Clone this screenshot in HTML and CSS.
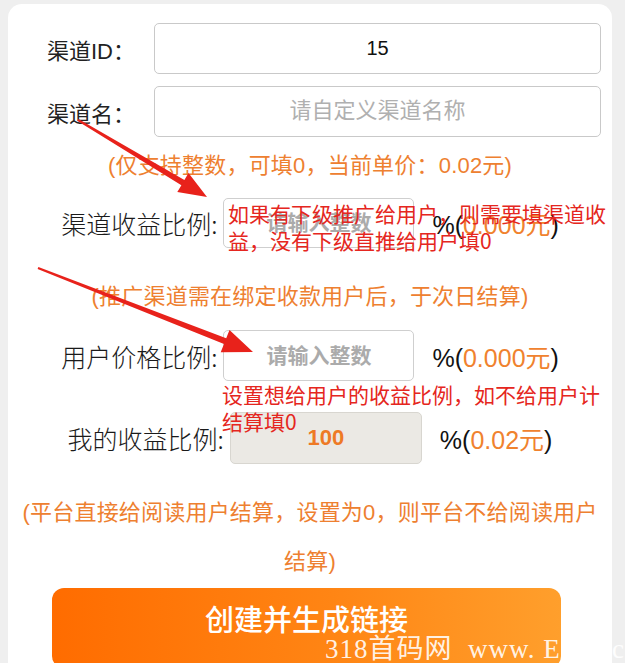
FILE: index.html
```html
<!DOCTYPE html>
<html lang="zh-CN">
<head>
<meta charset="utf-8">
<title>创建渠道</title>
<link rel="stylesheet" href="styles.css">
</head>
<body>
<div class="page">
  <div class="card">
    <div class="field">
      <label class="flabel">渠道ID：</label>
      <input class="finput" type="text" value="15">
    </div>
    <div class="field second">
      <label class="flabel">渠道名：</label>
      <input class="finput" type="text" placeholder="请自定义渠道名称">
    </div>
    <p class="note n1">(仅支持整数，可填0，当前单价：0.02元)</p>
    <div class="ratio r3">
      <label class="rlabel">渠道收益比例:</label>
      <input class="rinput" type="text" placeholder="请输入整数">
      <span class="suffix">%(<em>0.000元</em>)</span>
    </div>
    <p class="note n2">(推广渠道需在绑定收款用户后，于次日结算)</p>
    <div class="ratio r4">
      <label class="rlabel">用户价格比例:</label>
      <input class="rinput" type="text" placeholder="请输入整数">
      <span class="suffix">%(<em>0.000元</em>)</span>
    </div>
    <div class="ratio r5">
      <label class="rlabel">我的收益比例:</label>
      <input class="rinput mine" type="text" value="100" disabled>
      <span class="suffix">%(<em>0.02元</em>)</span>
    </div>
    <p class="note n3">(平台直接给阅读用户结算，设置为0，则平台不给阅读用户<br>结算)</p>
    <button class="submit" type="button">创建并生成链接</button>
  </div>

  <svg class="arrows" width="625" height="663" viewBox="0 0 625 663" aria-hidden="true">
    <polygon points="78.5,119.1 184.4,180 188.5,173.1 207,197 177.3,192.1 181.4,185.2 77.5,120.9"/>
    <polygon points="38.4,267.1 226.2,338.3 229.5,329.9 253,352 220.7,352.3 224,343.9 37.6,268.9"/>
  </svg>
  <div class="anno a1">如果有下级推广给用户，则需要填渠道收<br>益，没有下级直推给用户填0</div>
  <div class="anno a2">设置想给用户的收益比例，如不给用户计<br>结算填0</div>
  <div class="watermark">318首码网&nbsp; www. E318.com</div>
</div>
</body>
</html>
```

FILE: styles.css
```css
html, body {
  margin: 0;
  padding: 0;
  height: 663px;
  overflow: hidden;
  background: #efefef;
}

.page {
  position: relative;
  width: 625px;
  height: 663px;
  overflow: hidden;
  font-family: "Liberation Sans", "Noto Sans CJK SC", sans-serif;
}

.card {
  margin: 4px 0 0 8px;
  width: 604px;
  height: 720px;
  background: #ffffff;
  border-radius: 14px;
  padding-top: 19px;
  box-sizing: border-box;
}

.field {
  display: flex;
  align-items: center;
  padding: 0 11px 0 39px;
}

.field.second {
  margin-top: 12px;
}

.flabel {
  width: 107px;
  font-size: 22px;
  color: #222;
  font-family: "Liberation Sans", "Noto Sans CJK SC", sans-serif;
}

.finput {
  flex: 1;
  height: 51px;
  box-sizing: border-box;
  border: 1px solid #c9c9c9;
  border-radius: 5px;
  text-align: center;
  font-size: 20px;
  color: #111;
  font-family: "Liberation Sans", "Noto Sans CJK SC", sans-serif;
  background: #fff;
  outline: none;
  padding: 0;
}

.finput::placeholder {
  color: #b0b0b0;
  font-size: 22px;
}

.note {
  margin: 4px 0 0 0;
  line-height: 49px;
  font-size: 22px;
  color: #ee8030;
  text-align: center;
  letter-spacing: 0.2px;
  font-family: "Liberation Sans", "Noto Sans CJK SC", sans-serif;
}

.note.n2 {
  margin-top: 24px;
}

.note.n3 {
  margin-top: 24px;
}

.ratio {
  display: flex;
  justify-content: center;
  align-items: center;
}

.ratio.r3 {
  margin-top: 8px;
}

.ratio.r4 {
  margin-top: 9px;
}

.ratio.r5 {
  margin-top: 31px;
}

.rlabel {
  font-size: 25px;
  color: #1a1a1a;
  font-weight: 300;
  font-family: "Noto Sans CJK SC", sans-serif;
}

.rinput {
  width: 191px;
  height: 51px;
  margin-left: 6px;
  box-sizing: border-box;
  border: 1px solid #cfcfcf;
  border-radius: 5px;
  background: #fff;
  text-align: center;
  font-size: 21px;
  font-weight: bold;
  font-family: "Liberation Sans", "Noto Sans CJK SC", sans-serif;
  outline: none;
  padding: 0;
}

.r3 .rinput {
  height: 50px;
}

.rinput::placeholder {
  color: #ababab;
  font-weight: bold;
}

.rinput.mine {
  width: 192px;
  height: 52px;
  background: #ebe9e4;
  border-color: #d8d6d0;
  color: #ee7a25;
  font-size: 22px;
  -webkit-text-fill-color: #ee7a25;
  opacity: 1;
}

.suffix {
  margin-left: 18px;
  font-size: 25px;
  color: #111;
  font-family: "Liberation Sans", "Noto Sans CJK SC", sans-serif;
}

.suffix em {
  font-style: normal;
  color: #f0822e;
}

.submit {
  display: block;
  margin: 2px 0 0 44px;
  width: 509px;
  height: 80px;
  border: none;
  border-radius: 12px;
  background: linear-gradient(90deg, #ff6c00 0%, #ff8514 55%, #ff9f2c 100%);
  color: #fff;
  font-size: 29px;
  line-height: 60px;
  padding: 0 0 20px 0;
  font-family: "Noto Sans CJK SC", sans-serif;
  font-weight: 500;
  text-align: center;
}

.arrows {
  position: absolute;
  left: 0;
  top: 0;
  pointer-events: none;
}

.arrows polygon {
  fill: #e8221b;
}

.anno {
  position: absolute;
  font-size: 21px;
  line-height: 27px;
  color: #e52620;
  white-space: nowrap;
  font-family: "Noto Sans CJK SC", sans-serif;
}

.anno.a1 {
  left: 228px;
  top: 200px;
}

.anno.a2 {
  left: 222px;
  top: 381px;
}

.watermark {
  position: absolute;
  left: 325px;
  top: 633px;
  font-size: 27px;
  line-height: 32px;
  color: rgba(255, 255, 255, 0.9);
  white-space: nowrap;
  font-family: "Liberation Serif", "Noto Sans CJK SC", serif;
  letter-spacing: 1px;
}
```
